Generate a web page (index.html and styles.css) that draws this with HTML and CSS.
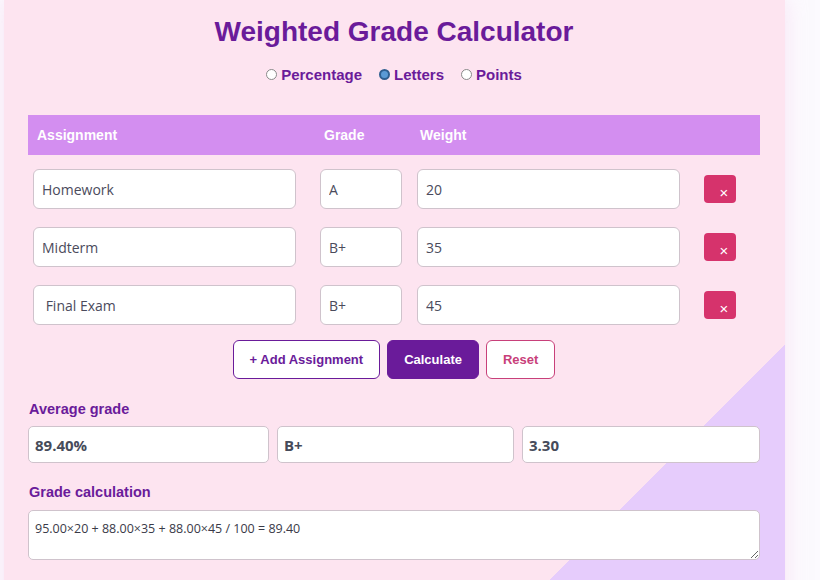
FILE: index.html
```html
<!DOCTYPE html>
<html lang="en">
<head>
  <meta charset="UTF-8" />
  <meta name="viewport" content="width=device-width, initial-scale=1.0" />
  <title>Weighted Grade Calculator</title>
  <link rel="stylesheet" href="styles.css">
</head>
<body>
  <div class="calculator">
    <h1>Weighted Grade Calculator</h1>

    <div class="modes">
      <label><input type="radio" name="mode" value="percentage"> Percentage</label>
      <label><input type="radio" name="mode" value="letters" checked> Letters</label>
      <label><input type="radio" name="mode" value="points"> Points</label>
    </div>

    <div class="table-head">
      <span>Assignment</span>
      <span>Grade</span>
      <span>Weight</span>
      <span></span>
    </div>

    <div class="rows">
      <div class="row">
        <input class="field" type="text" value="Homework">
        <input class="field" type="text" value="A">
        <input class="field" type="text" value="20">
        <button class="remove">&times;</button>
      </div>
      <div class="row">
        <input class="field" type="text" value="Midterm">
        <input class="field" type="text" value="B+">
        <input class="field" type="text" value="35">
        <button class="remove">&times;</button>
      </div>
      <div class="row">
        <input class="field" type="text" value=" Final Exam">
        <input class="field" type="text" value="B+">
        <input class="field" type="text" value="45">
        <button class="remove">&times;</button>
      </div>
    </div>

    <div class="actions">
      <button class="btn btn-outline">+ Add Assignment</button>
      <button class="btn btn-primary">Calculate</button>
      <button class="btn btn-reset">Reset</button>
    </div>

    <h3 class="label">Average grade</h3>
    <div class="results">
      <input class="result" type="text" value="89.40%" readonly>
      <input class="result" type="text" value="B+" readonly>
      <input class="result" type="text" value="3.30" readonly>
    </div>

    <h3 class="label">Grade calculation</h3>
    <textarea class="working" readonly>95.00×20 + 88.00×35 + 88.00×45 / 100 = 89.40</textarea>
  </div>
</body>
</html>
```

FILE: styles.css
```css
body {
  margin: 0;
  padding: 0;
  background: #fcfafe;
  font-family: 'Liberation Sans', Arial, sans-serif;
  color: #333;
}

.calculator {
  width: 732px;
  min-height: 580px;
  margin-left: 4px;
  padding: 16px 25px 20px 24px;
  background: linear-gradient(135deg, #fde4f0 796px, #e6ccfc 796px);
  box-shadow: 0 0 20px rgba(245, 205, 235, 0.5);
}

h1 {
  margin: 0;
  font-size: 28px;
  line-height: 32px;
  text-align: center;
  color: #6a1b9a;
}

.modes {
  display: flex;
  justify-content: center;
  gap: 17px;
  margin-top: 18px;
  font-size: 15px;
  font-weight: bold;
  color: #6a1b9a;
}

.modes label {
  display: flex;
  align-items: center;
  gap: 4px;
}

.modes input {
  appearance: none;
  width: 11px;
  height: 11px;
  margin: 0;
  border: 1px solid #8a8a8a;
  border-radius: 50%;
  background: #fff;
}

.modes input:checked {
  border: 2px solid #2f5f8f;
  background: #5b9bd5;
}

.table-head {
  display: grid;
  grid-template-columns: 287px 97px 278px 1fr;
  height: 40px;
  align-items: center;
  margin-top: 32px;
  background: #d38ef0;
  color: #fff;
  font-size: 14px;
  font-weight: bold;
}

.table-head span {
  padding-left: 9px;
}

.table-head span:nth-child(3) {
  padding-left: 8px;
}

.rows {
  display: flex;
  flex-direction: column;
  gap: 18px;
  padding-top: 14px;
}

.row {
  display: grid;
  grid-template-columns: 287px 97px 278px 1fr;
  align-items: center;
}

.field {
  box-sizing: border-box;
  width: 263px;
  height: 40px;
  margin-left: 5px;
  padding: 0 8px;
  border: 1px solid #cfc3cc;
  border-radius: 6px;
  background: #fff;
  font-family: 'Open Sans', sans-serif;
  font-size: 14px;
  color: #4b4b5c;
}

.row .field:nth-child(2) {
  width: 82px;
}

.remove {
  justify-self: start;
  margin-left: 14px;
  width: 32px;
  height: 28px;
  padding: 8px 0 0 8px;
  border: none;
  border-radius: 4px;
  background: #d6336c;
  color: #fff;
  font-family: 'Liberation Sans', Arial, sans-serif;
  font-size: 15px;
  line-height: 16px;
}

.actions {
  display: flex;
  justify-content: center;
  gap: 7px;
  margin-top: 15px;
}

.btn {
  height: 39px;
  padding: 0 16px;
  border-radius: 6px;
  font-family: 'Liberation Sans', Arial, sans-serif;
  font-size: 13px;
  font-weight: bold;
  cursor: pointer;
}

.btn-outline {
  background: #fff;
  color: #6a1b9a;
  border: 1px solid #6a1b9a;
}

.btn-primary {
  background: #6a1b9a;
  color: #fff;
  border: 1px solid #6a1b9a;
}

.btn-reset {
  background: #fff;
  color: #c8407a;
  border: 1px solid #c8407a;
}

.label {
  margin: 22px 0 0 1px;
  font-size: 14.5px;
  line-height: 17px;
  color: #6a1b9a;
}

.results {
  display: grid;
  grid-template-columns: 241px 237px 238px;
  justify-content: space-between;
  margin-top: 8px;
}

.result {
  box-sizing: border-box;
  height: 37px;
  padding: 0 6px;
  border: 1px solid #cfc3cc;
  border-radius: 5px;
  background: #fff;
  font-family: 'Open Sans', sans-serif;
  font-size: 15px;
  font-weight: bold;
  color: #464b5a;
}

.results + .label {
  margin-top: 21px;
}

.working {
  display: block;
  box-sizing: border-box;
  width: 100%;
  height: 50px;
  margin-top: 9px;
  padding: 9px 6px;
  border: 1px solid #cfc3cc;
  border-radius: 5px;
  background: #fff;
  font-family: 'Open Sans', sans-serif;
  font-size: 12.5px;
  color: #3a3a48;
  resize: vertical;
}
```
